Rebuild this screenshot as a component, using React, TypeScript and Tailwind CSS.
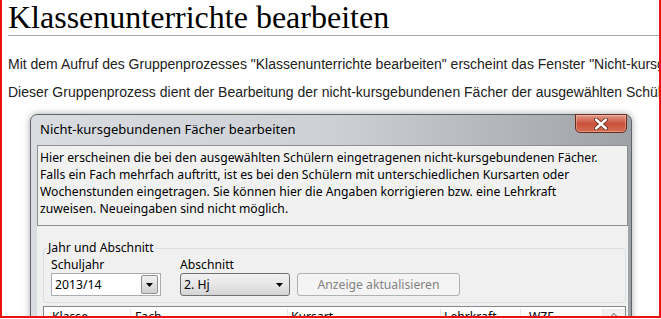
import { ChevronUp } from "lucide-react"

function Arrow() {
  return (
    <svg width="7" height="4" viewBox="0 0 7 4">
      <path d="M0 0h7L3.5 4z" fill="#000" />
    </svg>
  )
}

function CloseButton() {
  return (
    <div className="absolute top-[-1px] right-[4px] w-[52px] h-[19px] rounded-b-[5px] border border-[#6a2a1c] bg-gradient-to-b from-[#e39a88] via-[#c9503a] to-[#d36e52] flex items-center justify-center shadow-[inset_0_0_0_1px_rgba(255,255,255,0.3)]">
      <svg width="14" height="12" viewBox="0 0 14 12">
        <path d="M2 1.5L12 10.5M12 1.5L2 10.5" stroke="#5b2418" strokeWidth="4" strokeLinecap="round" />
        <path d="M2 1.5L12 10.5M12 1.5L2 10.5" stroke="#fff" strokeWidth="2.4" strokeLinecap="round" />
      </svg>
    </div>
  )
}

function Dialog() {
  return (
    <div className="relative ml-[22px] mt-3 w-[602px] h-[230px] rounded-t-[7px] border border-[#5f646b] bg-gradient-to-r from-[#d9dde1] via-[#cdd1d5] to-[#9ea2a6] pl-[6px] pr-[3px] shadow-[0_0_7px_rgba(0,0,0,0.35)] font-['Noto_Sans',sans-serif] text-black">
      <div className="h-[30px] flex items-center pl-[3px] text-[13px]">Nicht-kursgebundenen Fächer bearbeiten</div>
      <CloseButton />
      <div className="bg-[#f0f0f0] h-full text-[12.2px]">
        <div className="border border-[#8c8f93] bg-[#f1f1f1] pl-[2px] pt-[3px] pb-[8px] leading-[17px] whitespace-nowrap">
          <div>Hier erscheinen die bei den ausgewählten Schülern eingetragenen nicht-kursgebundenen Fächer.</div>
          <div>Falls ein Fach mehrfach auftritt, ist es bei den Schülern mit unterschiedlichen Kursarten oder</div>
          <div>Wochenstunden eingetragen. Sie können hier die Angaben korrigieren bzw. eine Lehrkraft</div>
          <div>zuweisen. Neueingaben sind nicht möglich.</div>
        </div>

        <div className="relative ml-[6px] mr-[2px] mt-[22px] border border-[#d5dfe5] rounded-[3px] pl-[7px] pt-[8px] pb-[6px] leading-[16px]">
          <span className="absolute -top-[9px] left-[3px] bg-[#f0f0f0] px-px">Jahr und Abschnitt</span>
          <div className="flex items-end">
            <div className="flex flex-col">
              <span>Schuljahr</span>
              <div className="w-[110px] h-[23px] bg-white border border-[#abadb3] flex items-center justify-between pl-[3px] pr-[2px]">
                <span>2013/14</span>
                <div className="w-[17px] h-[19px] border border-[#8e8f8f] rounded-[2px] bg-gradient-to-b from-[#f2f2f2] to-[#cfcfcf] flex items-center justify-center">
                  <Arrow />
                </div>
              </div>
            </div>
            <div className="flex flex-col ml-[19px]">
              <span>Abschnitt</span>
              <div className="w-[110px] h-[23px] border border-[#707070] rounded-[3px] bg-gradient-to-b from-[#f2f2f2] via-[#e6e6e6] to-[#d4d4d4] flex items-center justify-between pl-[3px] pr-[6px]">
                <span>2. Hj</span>
                <Arrow />
              </div>
            </div>
            <div className="ml-[7px] w-[163px] h-[23px] border border-[#adb2b5] rounded-[3px] bg-[#f4f4f4] text-[#838383] flex items-center justify-center">
              Anzeige aktualisieren
            </div>
          </div>
        </div>

        <div className="ml-[6px] mr-[2px] mt-[3px] border border-[#828790] bg-white flex leading-[16px] pt-[2px] h-[30px]">
          <div className="w-[87px] pl-[8px] border-r border-[#e5e5e5]">Klasse</div>
          <div className="w-[157px] pl-[4px] border-r border-[#e5e5e5]">Fach</div>
          <div className="w-[153px] pl-[3px] border-r border-[#e5e5e5]">Kursart</div>
          <div className="w-[80px] pl-[3px] border-r border-[#e5e5e5]">Lehrkraft</div>
          <div className="w-[82px] pl-[8px] border-r border-[#e5e5e5]">WZE</div>
          <div className="flex-1 flex justify-center bg-[#f0f0f0]">
            <ChevronUp size={12} strokeWidth={2} color="#555" />
          </div>
        </div>
      </div>
    </div>
  )
}

export default function App() {
  return (
    <div className="w-[661px] h-[318px] overflow-hidden bg-white border-2 border-t-0 border-[#ee1111] pl-[6px]">
      <h1 className="font-['Liberation_Serif',serif] text-[32px] leading-[34px] text-black border-b border-[#a2a9b1] pb-px">
        Klassenunterrichte bearbeiten
      </h1>
      <div className="font-['Liberation_Sans',Arial,sans-serif] text-[14px] leading-5 text-[#222] whitespace-nowrap">
        <p className="mt-[18px]">
          Mit dem Aufruf des Gruppenprozesses "Klassenunterrichte bearbeiten" erscheint das Fenster "Nicht-kursgebundenen Fächer bearbeiten".
        </p>
        <p className="mt-2">
          Dieser Gruppenprozess dient der Bearbeitung der nicht-kursgebundenen Fächer der ausgewählten Schüler.
        </p>
      </div>
      <Dialog />
    </div>
  )
}
